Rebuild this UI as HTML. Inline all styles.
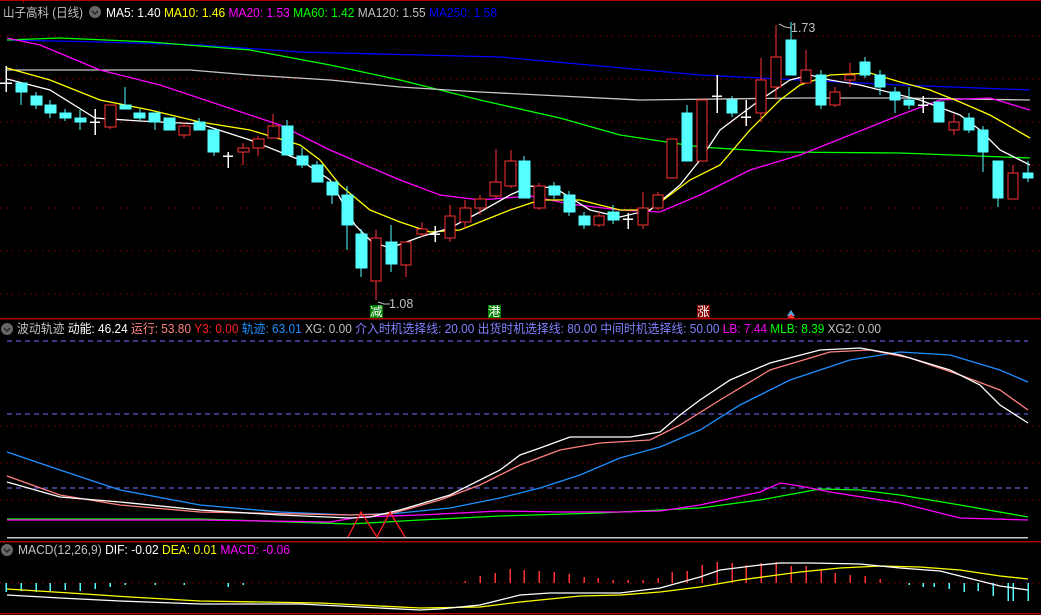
<!DOCTYPE html>
<html><head><meta charset="utf-8"><style>
html,body{margin:0;padding:0;background:#000;width:1041px;height:615px;overflow:hidden}
svg{display:block}
text{font-family:"Liberation Sans","Noto Sans CJK SC",sans-serif;font-size:12.5px}
.r{stroke:#ff3232;fill:#000;stroke-width:1.3}
.c{fill:#54ffff;stroke:#54ffff;stroke-width:1}
.w{stroke:#ff3232;stroke-width:1.3}
.wc{stroke:#54ffff;stroke-width:1.3}
.x{stroke:#fff;stroke-width:1.5}
.g{stroke:#8b0000;stroke-width:1.2;stroke-dasharray:1.5 4.5}
.l{fill:none;stroke-width:1.3}
</style></head><body>
<svg width="1041" height="615" viewBox="0 0 1041 615" xmlns="http://www.w3.org/2000/svg" shape-rendering="crispEdges">
<rect width="1041" height="615" fill="#000"/>
<line x1="0" y1="0.5" x2="1041" y2="0.5" stroke="#b00000"/>
<line x1="23.5" y1="0" x2="23.5" y2="3" stroke="#b00000"/>
<g class="g">
<line x1="0" y1="36" x2="1041" y2="36"/><line x1="0" y1="79" x2="1041" y2="79"/><line x1="0" y1="122" x2="1041" y2="122"/><line x1="0" y1="165" x2="1041" y2="165"/><line x1="0" y1="208" x2="1041" y2="208"/><line x1="0" y1="251" x2="1041" y2="251"/><line x1="0" y1="294" x2="1041" y2="294"/>
<line x1="0" y1="426" x2="1041" y2="426"/><line x1="0" y1="463" x2="1041" y2="463"/><line x1="0" y1="500" x2="1041" y2="500"/>
<line x1="0" y1="583" x2="1041" y2="583"/>
</g>
<line x1="0" y1="318.5" x2="1041" y2="318.5" stroke="#b00000" stroke-width="1.5"/>
<line x1="0" y1="541.5" x2="1041" y2="541.5" stroke="#b00000" stroke-width="1.5"/>
<line x1="0" y1="613.5" x2="1041" y2="613.5" stroke="#b00000" stroke-width="1.5"/>
<g shape-rendering="auto">
<polyline class="l" stroke="#0000ff" points="7,40 100,42 200,45 300,52 500,57 700,75 800,80 900,85 1030,90"/>
<polyline class="l" stroke="#00ff00" points="7,40 60,38 150,42 250,50 330,65 400,80 480,100 560,118 620,135 700,147 780,152 900,153 1030,158"/>
<polyline class="l" stroke="#c8c8c8" points="7,70 100,70 190,70 250,75 330,80 400,87 480,92 560,96 640,100 800,98 900,98 1030,100"/>
<polyline class="l" stroke="#ff00ff" points="7,38 40,45 100,70 160,85 220,105 280,125 330,150 400,180 440,195 480,200 530,196 570,204 620,210 660,212 700,195 750,170 800,155 850,135 900,115 940,100 990,98 1030,110"/>
<polyline class="l" stroke="#ffff00" points="7,68 50,80 100,100 150,110 200,122 250,130 300,145 320,160 340,185 370,210 400,222 430,232 460,230 490,218 510,210 540,200 580,200 620,210 650,210 690,180 720,165 750,130 780,100 800,85 830,75 870,73 900,82 930,90 960,102 990,115 1030,138"/>
<polyline class="l" stroke="#ffffff" points="7,79 50,90 95,118 140,121 200,124 250,140 300,160 330,180 355,225 372,242 390,248 420,237 450,228 480,212 510,195 530,186 555,188 590,210 620,217 650,210 680,185 700,160 720,130 740,115 760,100 790,80 810,75 830,80 860,85 880,90 920,100 960,115 980,130 1000,150 1030,165"/>
</g>
<g>
<line class="x" x1="6" y1="66" x2="6" y2="92"/><line class="x" x1="0" y1="83" x2="12" y2="83"/>
<line class="wc" x1="21" y1="83" x2="21" y2="105"/><rect class="c" x="16" y="83" width="11" height="9"/>
<line class="wc" x1="36" y1="92" x2="36" y2="109"/><rect class="c" x="31" y="96" width="11" height="9"/>
<line class="wc" x1="50" y1="100" x2="50" y2="118"/><rect class="c" x="45" y="105" width="11" height="8"/>
<line class="wc" x1="65" y1="109" x2="65" y2="121"/><rect class="c" x="60" y="113" width="11" height="5"/>
<line class="wc" x1="80" y1="110" x2="80" y2="130"/><rect class="c" x="75" y="118" width="11" height="4"/>
<line class="x" x1="95" y1="109" x2="95" y2="135"/><line class="x" x1="90" y1="122" x2="100" y2="122"/>
<line class="w" x1="110" y1="105" x2="110" y2="129"/><rect class="r" x="105" y="105" width="11" height="22"/>
<line class="wc" x1="125" y1="87" x2="125" y2="109"/><rect class="c" x="120" y="105" width="11" height="4"/>
<line class="wc" x1="140" y1="109" x2="140" y2="121"/><rect class="c" x="134" y="113" width="11" height="5"/>
<line class="wc" x1="155" y1="113" x2="155" y2="130"/><rect class="c" x="149" y="113" width="11" height="9"/>
<rect class="c" x="164" y="118" width="11" height="12"/>
<line class="w" x1="184" y1="122" x2="184" y2="138"/><rect class="r" x="179" y="126" width="11" height="9"/>
<line class="wc" x1="199" y1="118" x2="199" y2="130"/><rect class="c" x="194" y="122" width="11" height="8"/>
<line class="wc" x1="214" y1="130" x2="214" y2="156"/><rect class="c" x="208" y="130" width="11" height="22"/>
<line class="x" x1="228" y1="152" x2="228" y2="168"/><line class="x" x1="223" y1="156" x2="233" y2="156"/>
<line class="w" x1="243" y1="143" x2="243" y2="165"/><rect class="r" x="238" y="148" width="11" height="4"/>
<line class="w" x1="258" y1="136" x2="258" y2="156"/><rect class="r" x="253" y="139" width="11" height="9"/>
<line class="w" x1="273" y1="114" x2="273" y2="138"/><rect class="r" x="268" y="126" width="11" height="12"/>
<line class="wc" x1="287" y1="120" x2="287" y2="155"/><rect class="c" x="282" y="126" width="11" height="29"/>
<line class="wc" x1="302" y1="148" x2="302" y2="168"/><rect class="c" x="297" y="156" width="11" height="9"/>
<line class="wc" x1="317" y1="161" x2="317" y2="182"/><rect class="c" x="312" y="165" width="11" height="17"/>
<line class="wc" x1="332" y1="182" x2="332" y2="204"/><rect class="c" x="327" y="182" width="11" height="13"/>
<line class="wc" x1="347" y1="186" x2="347" y2="250"/><rect class="c" x="342" y="195" width="11" height="30"/>
<line class="wc" x1="361" y1="229" x2="361" y2="277"/><rect class="c" x="356" y="234" width="11" height="34"/>
<line class="w" x1="376" y1="230" x2="376" y2="300"/><rect class="r" x="371" y="238" width="10" height="43"/>
<line class="wc" x1="391" y1="225" x2="391" y2="272"/><rect class="c" x="386" y="242" width="11" height="22"/>
<line class="w" x1="406" y1="242" x2="406" y2="277"/><rect class="r" x="401" y="242" width="10" height="23"/>
<line class="w" x1="422" y1="222" x2="422" y2="237"/><rect class="r" x="417" y="229" width="10" height="5"/>
<line class="x" x1="435" y1="226" x2="435" y2="242"/><line class="x" x1="430" y1="234" x2="440" y2="234"/>
<line class="w" x1="450" y1="205" x2="450" y2="242"/><rect class="r" x="445" y="216" width="10" height="22"/>
<line class="w" x1="465" y1="200" x2="465" y2="228"/><rect class="r" x="460" y="208" width="11" height="14"/>
<line class="w" x1="480" y1="195" x2="480" y2="215"/><rect class="r" x="475" y="199" width="11" height="9"/>
<line class="w" x1="496" y1="149" x2="496" y2="198"/><rect class="r" x="490" y="182" width="11" height="14"/>
<line class="w" x1="511" y1="150" x2="511" y2="188"/><rect class="r" x="505" y="161" width="11" height="25"/>
<line class="wc" x1="524" y1="156" x2="524" y2="198"/><rect class="c" x="519" y="161" width="11" height="37"/>
<line class="w" x1="539" y1="183" x2="539" y2="210"/><rect class="r" x="534" y="186" width="11" height="22"/>
<line class="wc" x1="554" y1="182" x2="554" y2="199"/><rect class="c" x="549" y="186" width="11" height="9"/>
<line class="wc" x1="569" y1="191" x2="569" y2="216"/><rect class="c" x="564" y="195" width="11" height="17"/>
<line class="wc" x1="584" y1="212" x2="584" y2="229"/><rect class="c" x="579" y="216" width="11" height="9"/>
<line class="w" x1="599" y1="212" x2="599" y2="227"/><rect class="r" x="594" y="216" width="10" height="9"/>
<line class="wc" x1="613" y1="205" x2="613" y2="224"/><rect class="c" x="608" y="212" width="11" height="8"/>
<line class="x" x1="628" y1="213" x2="628" y2="229"/><line class="x" x1="623" y1="219" x2="633" y2="219"/>
<line class="w" x1="643" y1="192" x2="643" y2="229"/><rect class="r" x="638" y="208" width="10" height="17"/>
<line class="w" x1="658" y1="192" x2="658" y2="210"/><rect class="r" x="653" y="195" width="10" height="13"/>
<rect class="r" x="667" y="139" width="10" height="39"/>
<line class="wc" x1="687" y1="105" x2="687" y2="161"/><rect class="c" x="682" y="113" width="10" height="48"/>
<rect class="r" x="697" y="100" width="10" height="61"/>
<line class="x" x1="717" y1="75" x2="717" y2="113"/><line class="x" x1="712" y1="96" x2="722" y2="96"/>
<line class="wc" x1="732" y1="96" x2="732" y2="117"/><rect class="c" x="727" y="100" width="10" height="13"/>
<line class="x" x1="746" y1="100" x2="746" y2="126"/><line class="x" x1="741" y1="117" x2="751" y2="117"/>
<line class="w" x1="761" y1="58" x2="761" y2="122"/><rect class="r" x="756" y="80" width="10" height="33"/>
<line class="w" x1="776" y1="25" x2="776" y2="100"/><rect class="r" x="771" y="57" width="10" height="30"/>
<line class="wc" x1="791" y1="22" x2="791" y2="75"/><rect class="c" x="786" y="40" width="10" height="35"/>
<line class="w" x1="806" y1="50" x2="806" y2="83"/><rect class="r" x="801" y="70" width="10" height="13"/>
<line class="wc" x1="821" y1="70" x2="821" y2="109"/><rect class="c" x="816" y="75" width="10" height="30"/>
<line class="w" x1="835" y1="87" x2="835" y2="107"/><rect class="r" x="830" y="92" width="10" height="13"/>
<line class="w" x1="850" y1="63" x2="850" y2="87"/><rect class="r" x="845" y="75" width="10" height="5"/>
<line class="wc" x1="865" y1="57" x2="865" y2="78"/><rect class="c" x="860" y="62" width="10" height="13"/>
<line class="wc" x1="880" y1="70" x2="880" y2="95"/><rect class="c" x="875" y="75" width="10" height="12"/>
<line class="wc" x1="895" y1="87" x2="895" y2="113"/><rect class="c" x="890" y="92" width="10" height="8"/>
<line class="wc" x1="909" y1="87" x2="909" y2="109"/><rect class="c" x="904" y="100" width="10" height="5"/>
<line class="x" x1="923" y1="96" x2="923" y2="113"/><line class="x" x1="918" y1="105" x2="928" y2="105"/>
<rect class="c" x="934" y="102" width="10" height="20"/>
<line class="w" x1="954" y1="114" x2="954" y2="135"/><rect class="r" x="949" y="122" width="10" height="8"/>
<line class="wc" x1="969" y1="113" x2="969" y2="133"/><rect class="c" x="964" y="118" width="10" height="12"/>
<line class="wc" x1="983" y1="126" x2="983" y2="172"/><rect class="c" x="978" y="130" width="10" height="22"/>
<line class="wc" x1="998" y1="161" x2="998" y2="207"/><rect class="c" x="993" y="161" width="10" height="37"/>
<line class="w" x1="1013" y1="165" x2="1013" y2="173"/><rect class="r" x="1008" y="173" width="10" height="26"/>
<line class="wc" x1="1028" y1="161" x2="1028" y2="182"/><rect class="c" x="1023" y="173" width="10" height="5"/>
</g>
<g shape-rendering="auto">
<polyline points="378,302 384,304 390,304" fill="none" stroke="#bbb"/>
<text x="389" y="308" fill="#c0c0c0" font-size="12">1.08</text>
<polyline points="779,24 785,27 792,28" fill="none" stroke="#bbb"/>
<text x="791" y="32" fill="#c0c0c0" font-size="12">1.73</text>
</g>
<rect x="370" y="305" width="13" height="13" fill="#008000"/><text x="370" y="316" fill="#fff" font-size="12">减</text>
<rect x="488" y="305" width="13" height="13" fill="#008000"/><text x="488" y="316" fill="#fff" font-size="12">港</text>
<rect x="697" y="305" width="13" height="13" fill="#800000"/><text x="697" y="316" fill="#fff" font-size="12">涨</text>
<polygon points="787,316 791,310 795,316" fill="#5ad" shape-rendering="auto"/><polygon points="787,318 791,314 795,318" fill="#f33" shape-rendering="auto"/>
<g stroke="#7070ff" stroke-width="1.3" stroke-dasharray="5 4">
<line x1="7" y1="341" x2="1028" y2="341"/><line x1="7" y1="414" x2="1028" y2="414"/><line x1="7" y1="488" x2="1028" y2="488"/>
</g>
<line x1="7" y1="537.5" x2="1028" y2="537.5" stroke="#c8c8c8" stroke-width="1.5"/>
<g shape-rendering="auto">
<polyline class="l" stroke="#00ff00" points="7,519 200,519 350,524 420,520 500,516 600,513 700,508 760,500 820,489 860,490 900,495 960,505 1028,517"/>
<polyline class="l" stroke="#ff00ff" points="7,520 200,520 330,522 360,517 420,515 500,511 560,512 620,512 660,511 700,505 760,492 780,483 800,486 830,492 900,503 960,518 1028,520"/>
<polyline class="l" stroke="#1e90ff" points="7,452 60,470 120,490 200,505 280,512 350,515 400,513 450,508 500,498 540,488 580,475 620,458 660,447 700,430 740,405 790,380 850,360 900,352 950,355 1000,370 1028,382"/>
<polyline class="l" stroke="#ff8080" points="7,476 60,495 120,505 200,512 350,515 390,514 440,500 480,485 520,465 560,450 600,443 650,440 680,425 720,400 770,370 830,352 870,350 910,358 960,375 1000,390 1028,410"/>
<polyline class="l" stroke="#ffffff" points="7,482 60,497 120,502 200,510 280,515 350,518 370,517 400,510 450,495 500,470 520,455 540,448 570,437 630,437 660,432 680,415 700,400 730,380 770,363 820,350 860,348 900,355 950,370 980,385 1000,405 1028,423"/>
<polyline class="l" stroke="#ff2020" points="348,537 361,512 377,537 390,512 405,537"/>
</g>
<g stroke-width="1.5">
<g stroke="#54ffff">
<line x1="6" y1="583" x2="6" y2="592"/><line x1="21" y1="583" x2="21" y2="591"/><line x1="36" y1="583" x2="36" y2="592"/><line x1="50" y1="583" x2="50" y2="591"/><line x1="65" y1="583" x2="65" y2="590"/><line x1="80" y1="583" x2="80" y2="591"/><line x1="95" y1="583" x2="95" y2="589"/><line x1="110" y1="583" x2="110" y2="587"/><line x1="125" y1="583" x2="125" y2="585"/><line x1="155" y1="583" x2="155" y2="585"/><line x1="184" y1="583" x2="184" y2="585"/><line x1="228" y1="583" x2="228" y2="587"/><line x1="243" y1="583" x2="243" y2="585"/>
<line x1="909" y1="583" x2="909" y2="585"/><line x1="923" y1="583" x2="923" y2="587"/><line x1="934" y1="583" x2="934" y2="587"/><line x1="949" y1="583" x2="949" y2="589"/><line x1="964" y1="583" x2="964" y2="592"/><line x1="978" y1="583" x2="978" y2="591"/><line x1="993" y1="583" x2="993" y2="596"/><line x1="1008" y1="583" x2="1008" y2="601"/><line x1="1013" y1="583" x2="1013" y2="601"/><line x1="1028" y1="583" x2="1028" y2="601"/>
</g>
<g stroke="#ff3232">
<line x1="465" y1="583" x2="465" y2="581"/><line x1="480" y1="583" x2="480" y2="576"/><line x1="495" y1="583" x2="495" y2="573"/><line x1="510" y1="583" x2="510" y2="569"/><line x1="524" y1="583" x2="524" y2="570"/><line x1="539" y1="583" x2="539" y2="571"/><line x1="554" y1="583" x2="554" y2="572"/><line x1="569" y1="583" x2="569" y2="574"/><line x1="584" y1="583" x2="584" y2="577"/><line x1="598" y1="583" x2="598" y2="578"/><line x1="613" y1="583" x2="613" y2="580"/><line x1="628" y1="583" x2="628" y2="580"/><line x1="643" y1="583" x2="643" y2="580"/><line x1="658" y1="583" x2="658" y2="578"/><line x1="672" y1="583" x2="672" y2="572"/><line x1="687" y1="583" x2="687" y2="571"/><line x1="702" y1="583" x2="702" y2="565"/><line x1="717" y1="583" x2="717" y2="562"/><line x1="732" y1="583" x2="732" y2="563"/><line x1="746" y1="583" x2="746" y2="565"/><line x1="761" y1="583" x2="761" y2="563"/><line x1="776" y1="583" x2="776" y2="562"/><line x1="791" y1="583" x2="791" y2="566"/><line x1="806" y1="583" x2="806" y2="566"/><line x1="821" y1="583" x2="821" y2="570"/><line x1="835" y1="583" x2="835" y2="573"/><line x1="850" y1="583" x2="850" y2="575"/><line x1="865" y1="583" x2="865" y2="576"/><line x1="880" y1="583" x2="880" y2="579"/>
</g>
</g>
<g shape-rendering="auto">
<polyline class="l" stroke="#ffff00" stroke-width="1.6" points="7,589 70,593 130,597 200,601 320,603 420,608 480,607 520,602 580,596 620,595 660,592 700,587 740,580 770,576 800,572 840,568 880,566 920,567 960,570 1000,576 1028,579"/>
<polyline class="l" stroke="#ffffff" stroke-width="1.6" points="7,595 60,598 120,601 200,604 300,604 420,610 440,609 480,605 500,600 520,595 550,593 620,593 660,588 700,577 720,570 760,565 780,563 810,563 860,564 900,568 940,571 960,576 1000,586 1028,590"/>
</g>
<g shape-rendering="auto">
<text x="3" y="17" font-size="13" fill="#c0c0c0" textLength="80" lengthAdjust="spacingAndGlyphs">山子高科 (日线)</text>
<circle cx="95" cy="12" r="6" fill="#666"/><polyline points="92,11 95,14 98,11" fill="none" stroke="#222" stroke-width="1.3"/>
<text x="106" y="17" font-size="12.5" textLength="391" lengthAdjust="spacingAndGlyphs"><tspan fill="#fff">MA5: 1.40 </tspan><tspan fill="#ffff00">MA10: 1.46 </tspan><tspan fill="#ff00ff">MA20: 1.53 </tspan><tspan fill="#00ff00">MA60: 1.42 </tspan><tspan fill="#c0c0c0">MA120: 1.55 </tspan><tspan fill="#0000ff">MA250: 1.58</tspan></text>
<circle cx="7" cy="329" r="6" fill="#666"/><polyline points="4,328 7,331 10,328" fill="none" stroke="#222" stroke-width="1.3"/>
<text x="17" y="333" font-size="12.5" textLength="864" lengthAdjust="spacingAndGlyphs"><tspan fill="#c0c0c0">波动轨迹 </tspan><tspan fill="#fff">动能: 46.24 </tspan><tspan fill="#ff8080">运行: 53.80 </tspan><tspan fill="#ff2020">Y3: 0.00 </tspan><tspan fill="#1e90ff">轨迹: 63.01 </tspan><tspan fill="#c0c0c0">XG: 0.00 </tspan><tspan fill="#8080ff">介入时机选择线: 20.00 出货时机选择线: 80.00 中间时机选择线: 50.00 </tspan><tspan fill="#ff00ff">LB: 7.44 </tspan><tspan fill="#00ff00">MLB: 8.39 </tspan><tspan fill="#c0c0c0">XG2: 0.00</tspan></text>
<circle cx="7" cy="550" r="6" fill="#666"/><polyline points="4,549 7,552 10,549" fill="none" stroke="#222" stroke-width="1.3"/>
<text x="18" y="554" font-size="12.5" textLength="272" lengthAdjust="spacingAndGlyphs"><tspan fill="#c0c0c0">MACD(12,26,9) </tspan><tspan fill="#fff">DIF: -0.02 </tspan><tspan fill="#ffff00">DEA: 0.01 </tspan><tspan fill="#ff00ff">MACD: -0.06</tspan></text>
</g>
</svg>
</body></html>
